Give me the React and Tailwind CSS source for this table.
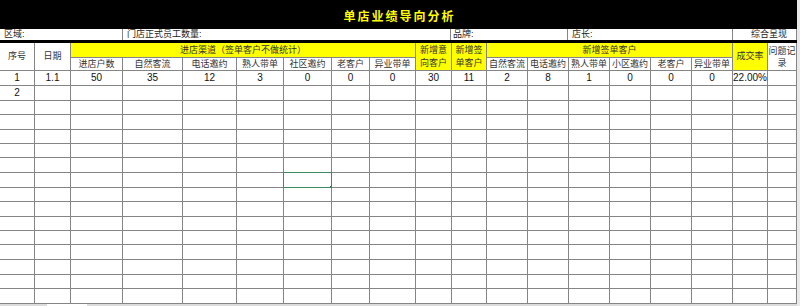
import React from "react";

const subA = ["进店户数", "自然客流", "电话邀约", "熟人带单", "社区邀约", "老客户", "异业带单"];
const subB = ["自然客流", "电话邀约", "熟人带单", "小区邀约", "老客户", "异业带单"];
const firstRow = ["1", "1.1", "50", "35", "12", "3", "0", "0", "0", "30", "11", "2", "8", "1", "0", "0", "0", "22.00%", ""];

const cell = "flex items-center justify-center bg-white overflow-hidden whitespace-nowrap text-[9px] leading-none";
const yellow = "flex items-center justify-center bg-[#ffff00] overflow-hidden whitespace-nowrap text-[9px] leading-none text-[#333]";

function Header() {
  return (
    <>
      <div className={`${cell} row-span-2 text-[#333]`}>序号</div>
      <div className={`${cell} row-span-2 text-[#333]`}>日期</div>
      <div className={`${yellow} col-span-7`}>进店渠道（签单客户不做统计）</div>
      <div className={`${yellow} row-span-2`}>
        <span className="block text-center leading-[13px]">
          新增意<br />向客户
        </span>
      </div>
      <div className={`${yellow} row-span-2`}>
        <span className="block text-center leading-[13px]">
          新增签<br />单客户
        </span>
      </div>
      <div className={`${yellow} col-span-6`}>新增签单客户</div>
      <div className={`${yellow} row-span-2`}>成交率</div>
      <div className={`${cell} row-span-2 items-start justify-start pt-[2px] text-[#333]`}>
        <span className="block w-[28px] text-center leading-[12px]">
          问题记<br />录
        </span>
      </div>
      {subA.map((t, i) => (
        <div key={"a" + i} className={`${cell} text-[#333]`}>{t}</div>
      ))}
      {subB.map((t, i) => (
        <div key={"b" + i} className={`${cell} text-[#333]`}>{t}</div>
      ))}
    </>
  );
}

function Body() {
  const rows = [];
  for (let r = 0; r < 16; r++) {
    for (let c = 0; c < 19; c++) {
      let text = "";
      if (r === 0) text = firstRow[c];
      if (r === 1 && c === 0) text = "2";
      const selected = r === 7 && c === 6;
      rows.push(
        <div
          key={r + "-" + c}
          className={`${cell} text-[10px] text-[#111] ${selected ? "relative z-10 outline-1 outline-[#3e8a60]" : ""}`}
        >
          {text}
          {selected && <span className="absolute -right-[2px] -bottom-[2px] w-[3px] h-[3px] bg-[#2e7a50]"></span>}
        </div>
      );
    }
  }
  return rows;
}

export default function App() {
  return (
    <div className="w-[800px] h-[306px] overflow-hidden flex bg-white font-['Liberation_Sans','Noto_Sans_CJK_SC',sans-serif]">
      <div className="w-[797px] flex flex-col">
        {/* Title */}
        <div className="h-[29px] bg-black flex items-center justify-center pt-[5px] pl-[2px]">
          <span className="text-[12px] font-bold tracking-[2px] text-[#ffff00]">单店业绩导向分析</span>
        </div>

        {/* Info row */}
        <div className="h-[11px] grid grid-cols-[122px_327px_116px_164px_63px] gap-px bg-[#858585] pr-px">
          <div className="bg-white flex items-center pl-[4px] text-[9px] leading-none text-[#222]">区域:</div>
          <div className="bg-white flex items-center pl-[4px] text-[9px] leading-none text-[#222]">门店正式员工数量:</div>
          <div className="bg-white flex items-center pl-[2px] text-[9px] leading-none text-[#222]">品牌:</div>
          <div className="bg-white flex items-center pl-[4px] text-[9px] leading-none text-[#222]">店长:</div>
          <div className="bg-white flex items-center justify-end pr-[9px] text-[9px] leading-none text-[#222]">综合呈现</div>
        </div>
        <div className="h-[3px] bg-black"></div>

        {/* Sheet */}
        <div className="grid grid-cols-[34px_35px_51px_59px_53px_46px_47px_37px_45px_35px_34px_40px_40px_40px_40px_40px_40px_34px_28px] grid-rows-[14px_12px_14px_14px_13px_14px_13px_13px_14px_14px_13px_14px_13px_13px_14px_14px_13px_14px] gap-px bg-[#858585] pr-px pb-px">
          <Header />
          <Body />
        </div>

        {/* Sheet tab strip */}
        <div className="flex-1 bg-[#dcdcdc] flex">
          <div className="ml-[47px] w-[40px] bg-white"></div>
        </div>
      </div>
      <div className="flex-1 bg-[#e9e9e9]"></div>
    </div>
  );
}
